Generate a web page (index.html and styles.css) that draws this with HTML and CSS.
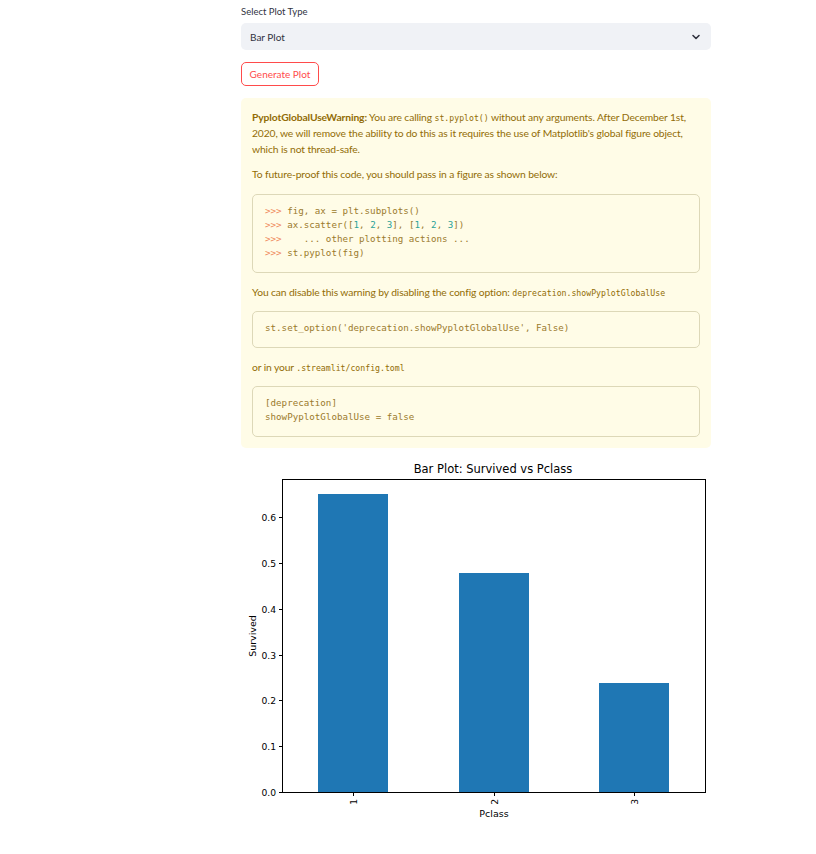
FILE: index.html
```html
<!DOCTYPE html>
<html>
<head>
<meta charset="utf-8">
<link rel="stylesheet" href="styles.css">
</head>
<body>
<main class="main">
  <label class="field-label">Select Plot Type</label>
  <div class="select">
    <span class="select-value">Bar Plot</span>
    <svg class="chevron" width="10" height="8" viewBox="0 0 10 8"><path d="M2 2.5 L5 5.5 L8 2.5" fill="none" stroke="#31333f" stroke-width="1.6" stroke-linecap="round" stroke-linejoin="round"/></svg>
  </div>
  <button class="btn">Generate Plot</button>
  <div class="warning">
    <p><strong>PyplotGlobalUseWarning:</strong> You are calling <code>st.pyplot()</code> without any arguments. After December 1st, 2020, we will remove the ability to do this as it requires the use of Matplotlib's global figure object, which is not thread-safe.</p>
    <p>To future-proof this code, you should pass in a figure as shown below:</p>
    <pre class="code"><span class="pr">&gt;&gt;&gt;</span> fig, ax = plt.subplots()
<span class="pr">&gt;&gt;&gt;</span> ax.scatter([<span class="nm">1</span>, <span class="nm">2</span>, <span class="nm">3</span>], [<span class="nm">1</span>, <span class="nm">2</span>, <span class="nm">3</span>])
<span class="pr">&gt;&gt;&gt;</span>    ... other plotting actions ...
<span class="pr">&gt;&gt;&gt;</span> st.pyplot(fig)</pre>
    <p>You can disable this warning by disabling the config option: <code>deprecation.showPyplotGlobalUse</code></p>
    <pre class="code">st.set_option('deprecation.showPyplotGlobalUse', False)</pre>
    <p>or in your <code>.streamlit/config.toml</code></p>
    <pre class="code">[deprecation]
showPyplotGlobalUse = false</pre>
  </div>
  <svg class="chart" width="470" height="380" viewBox="0 0 470 380">
    <text x="252" y="18" class="title" text-anchor="middle">Bar Plot: Survived vs Pclass</text>
    <rect x="77" y="39" width="70" height="298" fill="#1f77b4"/>
    <rect x="218" y="118" width="70" height="219" fill="#1f77b4"/>
    <rect x="358" y="228" width="70" height="109" fill="#1f77b4"/>
    <rect x="41.5" y="24.5" width="423" height="313" fill="none" stroke="#000" stroke-width="1"/>
    <g stroke="#000" stroke-width="1">
      <line x1="38" y1="337.5" x2="41.5" y2="337.5"/>
      <line x1="38" y1="291.5" x2="41.5" y2="291.5"/>
      <line x1="38" y1="245.5" x2="41.5" y2="245.5"/>
      <line x1="38" y1="200.5" x2="41.5" y2="200.5"/>
      <line x1="38" y1="154.5" x2="41.5" y2="154.5"/>
      <line x1="38" y1="108.5" x2="41.5" y2="108.5"/>
      <line x1="38" y1="62.5" x2="41.5" y2="62.5"/>
      <line x1="112.5" y1="337.5" x2="112.5" y2="341"/>
      <line x1="253.5" y1="337.5" x2="253.5" y2="341"/>
      <line x1="393.5" y1="337.5" x2="393.5" y2="341"/>
    </g>
    <g class="tick" text-anchor="end">
      <text x="35" y="341">0.0</text>
      <text x="35" y="295">0.1</text>
      <text x="35" y="249">0.2</text>
      <text x="35" y="204">0.3</text>
      <text x="35" y="158">0.4</text>
      <text x="35" y="112">0.5</text>
      <text x="35" y="66">0.6</text>
    </g>
    <g class="tick" text-anchor="end">
      <text transform="translate(116,344) rotate(-90)">1</text>
      <text transform="translate(257,344) rotate(-90)">2</text>
      <text transform="translate(397,344) rotate(-90)">3</text>
    </g>
    <text x="253" y="362" class="axlabel" text-anchor="middle">Pclass</text>
    <text transform="translate(15,181) rotate(-90)" class="axlabel" text-anchor="middle">Survived</text>
  </svg>
</main>
</body>
</html>
```

FILE: styles.css
```css
* { box-sizing: border-box; }
html, body { margin: 0; padding: 0; background: #ffffff; }
body { font-family: Lato, "Open Sans", sans-serif; color: #31333f; }
.main { width: 470px; margin-left: 241px; display: flex; flex-direction: column; align-items: flex-start; }
.field-label { display: block; font-size: 9.5px; line-height: 14px; padding-top: 5px; margin-bottom: 4px; color: #31333f; }
.select { width: 100%; height: 27px; background: #f0f2f6; border-radius: 5px; display: flex; align-items: center; justify-content: space-between; padding: 0 10px 0 9px; }
.select-value { font-size: 10px; color: #31333f; }
.chevron { display: block; }
.btn { margin-top: 12px; height: 24px; width: 78px; padding: 0; background: #fff; border: 1px solid #ff4b4b; border-radius: 5px; color: #ff4b4b; font-family: Lato, "Open Sans", sans-serif; font-size: 10px; }
.warning { margin-top: 12px; width: 100%; background: #fffce7; border-radius: 5px; padding: 11px 11px 11px 11px; color: #926c05; font-size: 10.3px; letter-spacing: -0.12px; line-height: 16px; }
.warning p { margin: 0; }
.warning p + p { margin-top: 9px; }
.warning strong { font-weight: 700; }
.warning code { font-family: "DejaVu Sans Mono", monospace; font-size: 8.2px; line-height: 0; letter-spacing: 0; }
.code { margin: 11px 0 11px 0; border: 1px solid #ddd8b8; border-radius: 5px; padding: 9px 12px 12px 12px; font-family: "DejaVu Sans Mono", monospace; font-size: 9.2px; line-height: 14px; letter-spacing: 0; color: #9b7a2c; white-space: pre; }
.code:first-of-type { margin-top: 12px; }
.code:last-child { margin-bottom: 0; }
.pr { color: #ef8a5e; }
.nm { color: #2aa198; }
.chart { display: block; margin-top: 7px; font-family: "DejaVu Sans", sans-serif; }
.chart .title { font-size: 11.5px; fill: #000; }
.chart .tick text { font-size: 9.2px; fill: #000; }
.chart .axlabel { font-size: 9.5px; fill: #000; }
```
